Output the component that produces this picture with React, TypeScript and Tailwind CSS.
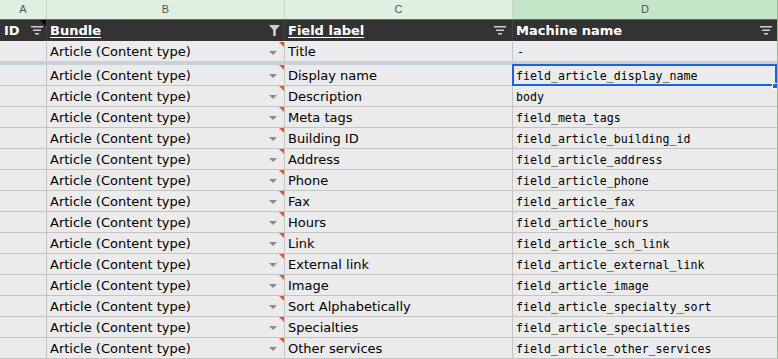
const rows: [string, string][] = [
  ["Display name", "field_article_display_name"],
  ["Description", "body"],
  ["Meta tags", "field_meta_tags"],
  ["Building ID", "field_article_building_id"],
  ["Address", "field_article_address"],
  ["Phone", "field_article_phone"],
  ["Fax", "field_article_fax"],
  ["Hours", "field_article_hours"],
  ["Link", "field_article_sch_link"],
  ["External link", "field_article_external_link"],
  ["Image", "field_article_image"],
  ["Sort Alphabetically", "field_article_specialty_sort"],
  ["Specialties", "field_article_specialties"],
  ["Other services", "field_article_other_services"],
];

const sans = "font-['DejaVu_Sans',Verdana,sans-serif]";
const mono = "font-['DejaVu_Sans_Mono','Liberation_Mono',monospace] text-[11.6px] pt-[3px]";

function Lines() {
  return (
    <svg width="12" height="9" viewBox="0 0 12 9" className="shrink-0">
      <rect x="0" y="0" width="12" height="1.5" fill="#cfcfcf" />
      <rect x="2" y="3.5" width="8" height="1.5" fill="#cfcfcf" />
      <rect x="4" y="7" width="4" height="1.5" fill="#cfcfcf" />
    </svg>
  );
}

function Funnel() {
  return (
    <svg width="11" height="11" viewBox="0 0 11 11" className="shrink-0">
      <path d="M0 0 H11 L6.8 5 V11 H4.2 V5 Z" fill="#cfcfcf" />
    </svg>
  );
}

function Arrow() {
  return (
    <svg width="8" height="4" viewBox="0 0 8 4" className="shrink-0 mt-[2px]">
      <path d="M0 0 H8 L4 4 Z" fill="#8a8a8a" />
    </svg>
  );
}

function RedMark() {
  return <div className="absolute right-0 top-0 w-0 h-0 border-t-[5px] border-l-[5px] border-t-[#ee4b2b] border-l-transparent" />;
}

function BundleCell() {
  return (
    <div className="relative flex items-center justify-between pl-[3px] pr-[7px] border-r border-[#c4c4c4]">
      <span>Article (Content type)</span>
      <Arrow />
      <RedMark />
    </div>
  );
}

export default function App() {
  const grid = "grid grid-cols-[47px_238px_228px_1fr]";
  return (
    <div className={`w-[778px] h-[359px] overflow-hidden bg-[#ebebeb] text-black ${sans} border-r border-[#8fbf8f]`}>
      {/* column letters */}
      <div className={`${grid} h-[20px] border-b border-[#3f7f4e] text-[11px] text-[#555] font-['Liberation_Sans',Arial,sans-serif]`}>
        <div className="flex items-center justify-center bg-[#dff0e2] border-r border-[#c4d4c6]">A</div>
        <div className="flex items-center justify-center bg-[#dff0e2] border-r border-[#c4d4c6]">B</div>
        <div className="flex items-center justify-center bg-[#dff0e2] border-r border-[#c4d4c6]">C</div>
        <div className="flex items-center justify-center bg-[#c5e5c9]">D</div>
      </div>

      {/* dark header */}
      <div className={`${grid} h-[21px] bg-[#333333] text-white font-bold text-[13px]`}>
        <div className="relative flex items-center justify-between pl-[4px] pr-[3px] border-r border-[#444]">
          <span>ID</span>
          <Lines />
          <div className="absolute right-0 top-0 w-0 h-0 border-t-[6px] border-l-[6px] border-t-black border-l-transparent" />
        </div>
        <div className="flex items-center justify-between pl-[3px] pr-[4px] border-r border-[#444]">
          <span className="underline underline-offset-2">Bundle</span>
          <Funnel />
        </div>
        <div className="flex items-center justify-between pl-[3px] pr-[6px] border-r border-[#444]">
          <span className="underline underline-offset-2">Field label</span>
          <Lines />
        </div>
        <div className="flex items-center justify-between pl-[3px] pr-[5px]">
          <span>Machine name</span>
          <Lines />
        </div>
      </div>

      {/* frozen row */}
      <div className={`${grid} h-[20px] text-[13px] leading-none pt-px`}>
        <div className="border-r border-[#c4c4c4]" />
        <BundleCell />
        <div className="flex items-center pl-[3px] border-r border-[#c4c4c4]">Title</div>
        <div className={`flex items-center pl-[4px] ${mono}`}>-</div>
      </div>
      <div className="h-[4px] bg-[#c9d1dd]" />

      {rows.map(([label, machine], i) => (
        <div key={label} className={`${grid} h-[21px] border-b border-[#c4c4c4] text-[13px] leading-none`}>
          <div className="border-r border-[#c4c4c4]" />
          <BundleCell />
          <div className="flex items-center pl-[3px] pt-px border-r border-[#c4c4c4]">{label}</div>
          <div className={`relative flex items-center pl-[3px] ${mono}`}>
            {machine}
            {i === 0 && (
              <>
                <div className="absolute -left-px -top-px right-0 -bottom-px border-2 border-[#1a62e0]" />
                <div className="absolute -right-px -bottom-[4px] w-[6px] h-[6px] bg-[#1a62e0] border border-white" />
              </>
            )}
          </div>
        </div>
      ))}
    </div>
  );
}
